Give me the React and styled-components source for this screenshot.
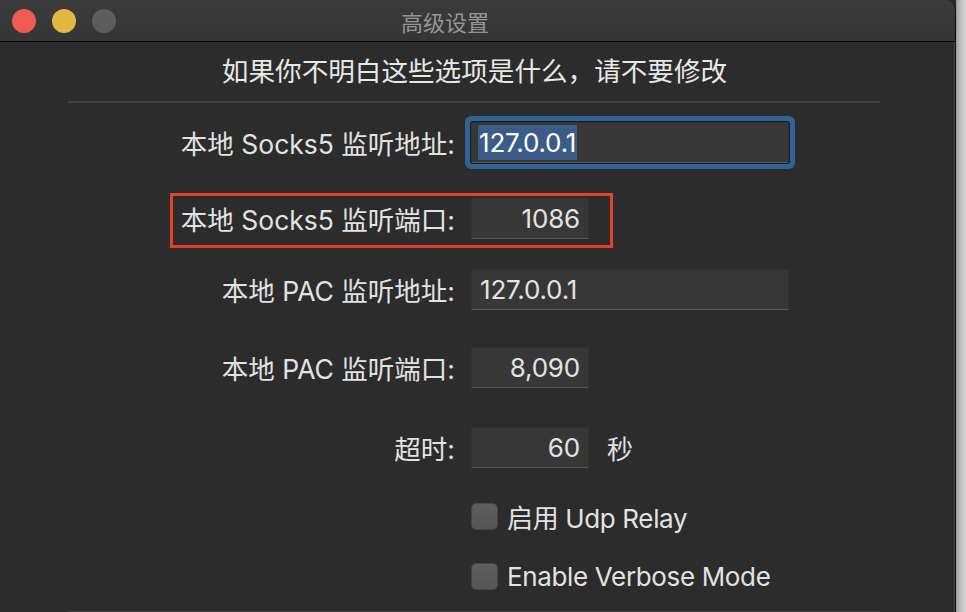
import styled, { createGlobalStyle } from 'styled-components';

const GlobalStyle = createGlobalStyle`
  html, body {
    margin: 0;
    padding: 0;
  }
  body {
    width: 966px;
    height: 612px;
    overflow: hidden;
    font-family: "Inter", "Noto Sans CJK SC", sans-serif;
  }
`;

const Page = styled.div`
  display: flex;
  width: 966px;
  height: 612px;
  background: linear-gradient(to right, #9a9a9a 0px, #bdbdbd 4px, #d6d6d6 10px);
  background-position: 956px 0;
  background-repeat: no-repeat;
  background-color: #2b2c2b;
`;

const Window = styled.div`
  display: flex;
  flex-direction: column;
  width: 955px;
  height: 612px;
  background: #2b2c2b;
  border-right: 1px solid #0c0c0c;
  border-top-right-radius: 10px;
  box-shadow: inset -1px 0 0 #474747;
  overflow: hidden;
`;

const TitleBar = styled.div`
  display: flex;
  align-items: center;
  height: 41px;
  padding-left: 12px;
  background: linear-gradient(#3b3b3b, #353535);
  border-bottom: 1px solid #050505;
  flex-shrink: 0;
`;

const Lights = styled.div`
  display: flex;
  gap: 16px;
`;

const Light = styled.span`
  width: 24px;
  height: 24px;
  border-radius: 50%;
  background: ${(p) => p.$color};
`;

const Title = styled.div`
  flex: 1;
  text-align: center;
  padding-right: 181px;
  font-size: 22px;
  color: #959595;
  font-family: "Noto Sans CJK SC", sans-serif;
`;

const Body = styled.div`
  display: flex;
  flex-direction: column;
  padding-top: 10px;
`;

const Heading = styled.div`
  height: 36px;
  line-height: 36px;
  text-align: center;
  padding-right: 6px;
  font-size: 26.6px;
  color: #e8e8e8;
  font-family: "Noto Sans CJK SC", sans-serif;
`;

const Divider = styled.div`
  height: 2px;
  margin: ${(p) => p.$mt || 0}px 75px 0 68px;
  background: #414141;
`;

const Row = styled.div`
  position: relative;
  display: flex;
  align-items: center;
  height: 41px;
  margin-top: ${(p) => p.$mt}px;
`;

const Label = styled.div`
  width: 455px;
  flex-shrink: 0;
  margin-right: 16px;
  text-align: right;
  font-size: 26.5px;
  color: #e2e2e2;
`;

const Field = styled.div`
  box-sizing: border-box;
  display: flex;
  align-items: center;
  justify-content: ${(p) => (p.$right ? 'flex-end' : 'flex-start')};
  width: ${(p) => p.$w}px;
  height: 41px;
  padding: 0 8px;
  background: #373737;
  border: 1px solid #313131;
  border-bottom-color: #575757;
  font-size: 26px;
  letter-spacing: -0.2px;
  color: #e2e2e2;
  border-radius: ${(p) => (p.$focused ? '2px' : '0')};
  box-shadow: ${(p) =>
    p.$focused ? '0 0 0 1px #1d1d1d, 0 0 0 6px #2f6397' : 'none'};
`;

const Selected = styled.span`
  display: inline-block;
  height: 35px;
  line-height: 35px;
  margin-left: -2px;
  padding: 0 1px;
  background: #3b5c86;
  color: #ffffff;
`;

const Unit = styled.span`
  margin-left: 18px;
  font-size: 26px;
  color: #e2e2e2;
`;

const Checkbox = styled.span`
  box-sizing: border-box;
  width: 27px;
  height: 27px;
  border-radius: 5px;
  background: linear-gradient(#5e5e5e, #555555);
  border: 1px solid #464646;
`;

const CheckText = styled.span`
  margin-left: 9px;
  font-size: 26px;
  letter-spacing: -0.35px;
  color: #e2e2e2;
`;

const Highlight = styled.div`
  position: absolute;
  left: 170px;
  top: -5px;
  width: 443px;
  height: 55px;
  box-sizing: border-box;
  border: 3px solid #e6402a;
  pointer-events: none;
`;

export default function App() {
  return (
    <Page>
      <GlobalStyle />
      <Window>
        <TitleBar>
          <Lights>
            <Light $color="#ef5b53" />
            <Light $color="#e0b943" />
            <Light $color="#5d5d5d" />
          </Lights>
          <Title>高级设置</Title>
        </TitleBar>
        <Body>
          <Heading>如果你不明白这些选项是什么，请不要修改</Heading>
          <Divider $mt={13} />

          <Row $mt={19}>
            <Label>本地 Socks5 监听地址:</Label>
            <Field $w={318} $focused>
              <Selected>127.0.0.1</Selected>
            </Field>
          </Row>

          <Row $mt={35}>
            <Highlight />
            <Label>本地 Socks5 监听端口:</Label>
            <Field $w={118} $right>
              1086
            </Field>
          </Row>

          <Row $mt={30}>
            <Label>本地 PAC 监听地址:</Label>
            <Field $w={318}>127.0.0.1</Field>
          </Row>

          <Row $mt={37}>
            <Label>本地 PAC 监听端口:</Label>
            <Field $w={118} $right>
              8,090
            </Field>
          </Row>

          <Row $mt={39}>
            <Label>超时:</Label>
            <Field $w={118} $right>
              60
            </Field>
            <Unit>秒</Unit>
          </Row>

          <Row $mt={28}>
            <Label />
            <Checkbox />
            <CheckText>启用 Udp Relay</CheckText>
          </Row>

          <Row $mt={19}>
            <Label />
            <Checkbox />
            <CheckText>Enable Verbose Mode</CheckText>
          </Row>

          <Divider $mt={14} />
        </Body>
      </Window>
    </Page>
  );
}
